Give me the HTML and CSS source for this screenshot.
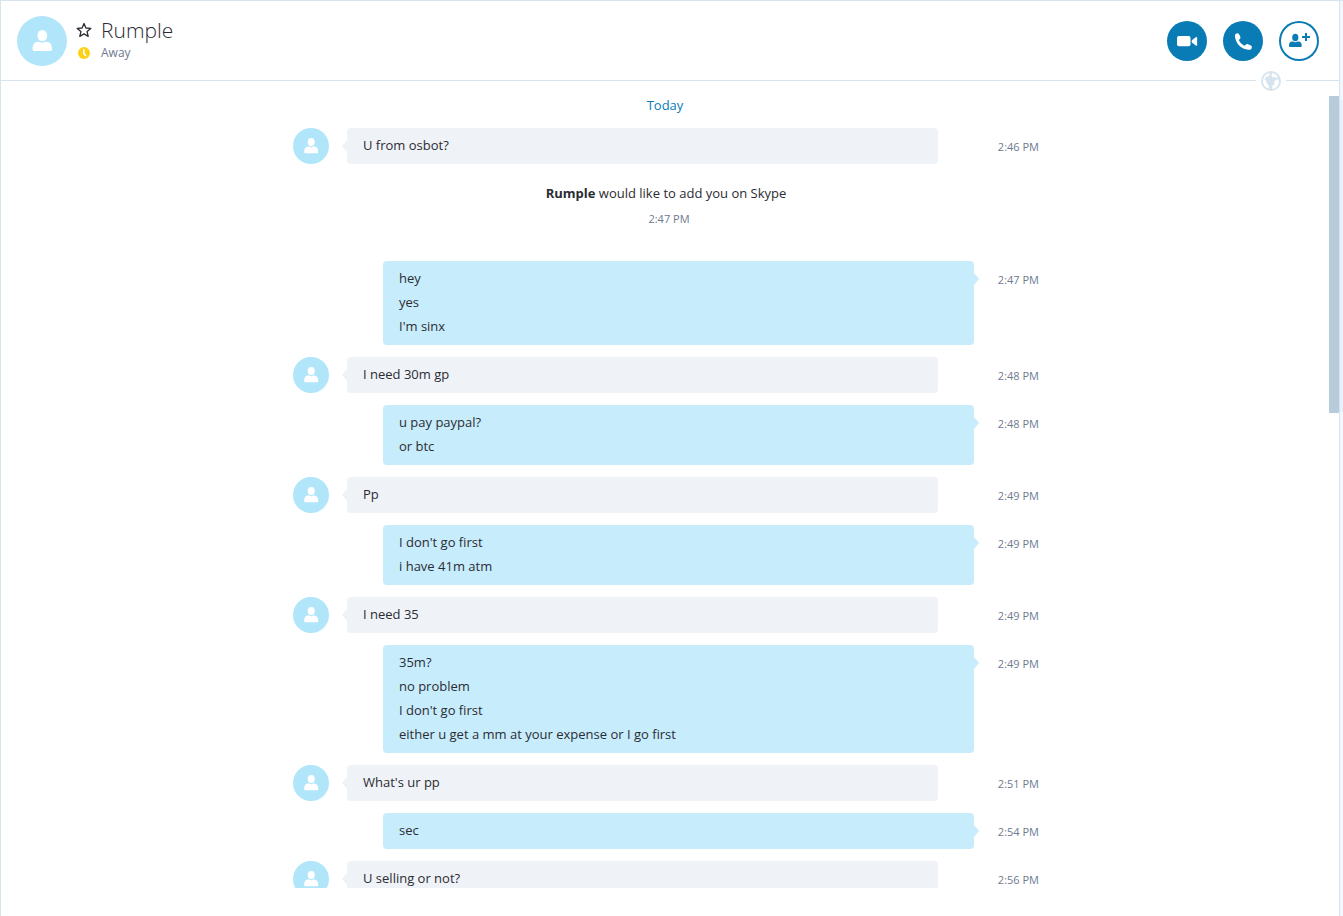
FILE: index.html
```
<!DOCTYPE html>
<html lang="en">
<head>
    <meta charset="UTF-8">
    <meta name="viewport" content="width=device-width, initial-scale=1.0">
    <title>Rumple</title>
    <link rel="stylesheet" href="styles.css">
</head>
<body>
    <!-- Shared icons -->
    <svg class="sprite" aria-hidden="true">
        <symbol id="person" viewBox="0 0 50 50">
            <ellipse cx="25.300" cy="19.600" rx="4.900" ry="5.700"/>
            <path d="M15.600 33c0-4 1.800-7.200 5.600-7.200 1.600 0 2.200 1 4.100 1s2.500-1 4.100-1c3.800 0 5.600 3.200 5.600 7.200 0 1.400-.6 2.100-1.700 2.100H17.300c-1.100 0-1.700-.7-1.700-2.100z"/>
        </symbol>
    </svg>

    <div class="window">
        <main class="chat">
            <header class="chat-header">
                <div class="avatar avatar-large"><svg><use href="#person"/></svg></div>
                <div class="contact">
                    <button type="button" class="icon-button" aria-label="Add to favourites">
                        <svg width="16" height="16" viewBox="0 0 16 16"><path d="M8 1.500l1.900 4.500 4.900.4-3.700 3.200 1.100 4.800L8 11.900l-4.200 2.500 1.100-4.800L1.200 6.400l4.900-.4z" fill="none" stroke="#2b2c33" stroke-width="1.300" stroke-linejoin="round"/></svg>
                    </button>
                    <h1>Rumple</h1>
                    <svg width="12" height="12" viewBox="0 0 12 12"><circle cx="6" cy="6" r="6" fill="#fcd116"/><path d="M5.800 2.800v3.700l1.800 2" fill="none" stroke="#fff" stroke-width="1.700" stroke-linecap="round" stroke-linejoin="round"/></svg>
                    <p>Away</p>
                </div>
                <div class="calls">
                    <button type="button" class="call" aria-label="Video call">
                        <svg width="40" height="40" viewBox="0 0 40 40"><rect x="10" y="15" width="13.500" height="10.300" rx="2"/><path d="M24.800 19.200l4-3c.7-.5 1.300-.3 1.300.5v7.200c0 .8-.6 1-1.300.5l-4-3z"/></svg>
                    </button>
                    <button type="button" class="call" aria-label="Call">
                        <svg width="40" height="40" viewBox="0 0 40 40"><path d="M12.600 13c1.200-1 2.900-.9 3.600.4l1.100 2.400c.4.900.1 1.700-.8 2.500-.6.5-.6 1.100-.1 2 1.200 1.800 2.300 2.900 4 3.900.9.500 1.500.4 2.100-.2.800-.8 1.600-1.100 2.500-.7l2.500 1c1.200.5 1.500 1.500 1.200 2.600-.4 1.500-1.700 2-3.200 1.900-7.400-.6-12.500-6-13.400-12.500-.2-1.400-.2-2.600.5-3.300z"/></svg>
                    </button>
                    <button type="button" class="call call-outline" aria-label="Add people">
                        <svg width="40" height="40" viewBox="0 0 40 40"><ellipse cx="16.300" cy="16.500" rx="3.100" ry="3.800"/><path d="M10 24.700c0-2.600 1-4.200 3.200-4.200 1.100 0 1.700.7 3.100.7s2-.7 3.100-.7c2.200 0 3.300 1.600 3.300 4.200 0 .9-.4 1.300-1.200 1.300H11.200c-.8 0-1.200-.4-1.200-1.300z"/><path d="M27 12v8M23 16h8" stroke="#0a7cb5" stroke-width="2"/></svg>
                    </button>
                </div>
                <button type="button" class="globe" aria-label="Translator">
                    <svg width="20" height="20" viewBox="0 0 20 20"><circle cx="10" cy="10" r="10" fill="#d7e4ee"/><path d="M2 10.500C2 6.500 4 3.500 7.500 2.300L9 3.500 7.800 5 5 6 3.500 8.500 5 9.500 5.500 12l2 2 .5 3.500C4.500 17 2 14 2 10.500zM11 2c2.500.3 4.500 1.600 5.800 3.600L15.500 7 14 6l-2 .7-1.500-2zM17 8l1 3c-.3 3.500-3 6.500-6.500 7L11 15.500l2.500-2.500-.5-2.500 1.500-1z" fill="#fff"/></svg>
                </button>
            </header>

            <section class="messages">
                <div class="scroll">
                    <div class="day">Today</div>
                    <ol class="thread">
                        <li class="row">
                            <div class="avatar"><svg><use href="#person"/></svg></div>
                            <div class="bubble"><p>U from osbot?</p></div>
                            <time>2:46 PM</time>
                        </li>
                        <li class="notice">
                            <p><strong>Rumple</strong> would like to add you on Skype</p>
                            <time>2:47 PM</time>
                        </li>
                        <li class="row">
                            <div class="bubble mine"><p>hey</p><p>yes</p><p>I'm sinx</p></div>
                            <time>2:47 PM</time>
                        </li>
                        <li class="row">
                            <div class="avatar"><svg><use href="#person"/></svg></div>
                            <div class="bubble"><p>I need 30m gp</p></div>
                            <time>2:48 PM</time>
                        </li>
                        <li class="row">
                            <div class="bubble mine"><p>u pay paypal?</p><p>or btc</p></div>
                            <time>2:48 PM</time>
                        </li>
                        <li class="row">
                            <div class="avatar"><svg><use href="#person"/></svg></div>
                            <div class="bubble"><p>Pp</p></div>
                            <time>2:49 PM</time>
                        </li>
                        <li class="row">
                            <div class="bubble mine"><p>I don't go first</p><p>i have 41m atm</p></div>
                            <time>2:49 PM</time>
                        </li>
                        <li class="row">
                            <div class="avatar"><svg><use href="#person"/></svg></div>
                            <div class="bubble"><p>I need 35</p></div>
                            <time>2:49 PM</time>
                        </li>
                        <li class="row">
                            <div class="bubble mine"><p>35m?</p><p>no problem</p><p>I don't go first</p><p>either u get a mm at your expense or I go first</p></div>
                            <time>2:49 PM</time>
                        </li>
                        <li class="row">
                            <div class="avatar"><svg><use href="#person"/></svg></div>
                            <div class="bubble"><p>What's ur pp</p></div>
                            <time>2:51 PM</time>
                        </li>
                        <li class="row">
                            <div class="bubble mine"><p>sec</p></div>
                            <time>2:54 PM</time>
                        </li>
                        <li class="row">
                            <div class="avatar"><svg><use href="#person"/></svg></div>
                            <div class="bubble"><p>U selling or not?</p></div>
                            <time>2:56 PM</time>
                        </li>
                    </ol>
                </div>
                <div class="scrollbar"><div class="thumb"></div></div>
            </section>
        </main>
        <aside class="side"><div class="side-item"></div></aside>
    </div>
</body>
</html>
```
FILE: styles.css
```
* {
    box-sizing: border-box;
}
body {
    margin: 0;
    font-family: "Open Sans", "Noto Sans", sans-serif;
    font-size: 13px;
    line-height: 24px;
    color: #2b2c33;
    background-color: #ffffff;
}
h1, p, ol {
    margin: 0;
    padding: 0;
}
button {
    padding: 0;
    border: none;
    background: none;
    cursor: pointer;
}
svg {
    display: block;
}
.sprite {
    display: none;
}
.window {
    display: flex;
    height: 100vh;
    border-top: 1px solid #d7e4ee;
    border-left: 1px solid #d7e4ee;
}
.chat {
    flex: 1;
    min-width: 0;
    display: flex;
    flex-direction: column;
    padding-bottom: 28px;
}

/* Header */
.chat-header {
    position: relative;
    display: flex;
    align-items: center;
    padding: 15px 20px 14px 16px;
    border-bottom: 1px solid #d7e4ee;
}
.avatar {
    flex: none;
    width: 36px;
    height: 36px;
    border-radius: 50%;
    background-color: #b1e6fa;
}
.avatar svg {
    width: 100%;
    height: 100%;
    fill: #ffffff;
}
.avatar-large {
    width: 50px;
    height: 50px;
}
.contact {
    flex: 1;
    display: grid;
    grid-template-columns: 16px 1fr;
    column-gap: 9px;
    align-items: center;
    justify-items: start;
    margin-left: 9px;
    padding-bottom: 4px;
}
.contact > svg {
    justify-self: center;
}
.contact h1 {
    font-size: 21px;
    font-weight: 300;
    line-height: 28px;
}
.contact p {
    font-size: 12px;
    line-height: 18px;
    color: #6e7a8f;
}
.calls {
    display: flex;
    gap: 16px;
}
.call {
    width: 40px;
    height: 40px;
    border-radius: 50%;
    background-color: #0a7cb5;
    fill: #ffffff;
}
.call-outline {
    background-color: #ffffff;
    box-shadow: inset 0 0 0 2px #0a7cb5;
    fill: #0a7cb5;
}
.globe {
    position: absolute;
    right: 53px;
    bottom: -11px;
    padding: 0 5px;
    background-color: #ffffff;
}

/* Messages */
.messages {
    flex: 1;
    min-height: 0;
    display: flex;
    overflow: hidden;
}
.scroll {
    flex: 1;
    padding-top: 13px;
}
.day {
    display: flex;
    align-items: center;
    gap: 18px;
    line-height: 22px;
    color: #0a7cb5;
}
.day::before, .day::after {
    content: "";
    flex: 1;
    height: 1px;
    background-color: #fcfdfd;
}
.thread {
    list-style: none;
    max-width: 748px;
    margin: 0 auto;
    padding: 12px 0 0 2px;
}
.row {
    display: flex;
    align-items: flex-start;
    margin-bottom: 12px;
}
.bubble {
    position: relative;
    flex: 1;
    margin: 0 36px 0 18px;
    padding: 5px 16px 7px;
    border-radius: 4px;
    background-color: #eff2f7;
}
.bubble::before {
    content: "";
    position: absolute;
    top: 12px;
    left: -5px;
    border: solid transparent;
    border-width: 6px 5px 6px 0;
    border-right-color: #eff2f7;
}
.mine {
    margin: 0 0 0 90px;
    background-color: #c7ecfc;
}
.mine::before {
    left: auto;
    right: -5px;
    border-width: 6px 0 6px 5px;
    border-color: transparent transparent transparent #c7ecfc;
}
time {
    font-size: 11px;
    color: #6e7a8f;
}
.row time {
    width: 65px;
    padding-top: 7px;
    text-align: right;
}
.notice {
    padding: 5px 0 16px;
    margin-bottom: 12px;
    text-align: center;
}
.notice time {
    display: block;
    padding-left: 6px;
    line-height: 28px;
}

/* Scrollbar and the edge of the next panel */
.scrollbar {
    width: 10px;
    padding-top: 15px;
}
.thumb {
    height: 40%;
    background-color: #b7cbda;
}
.side {
    width: 4px;
    padding-top: 99px;
    border-left: 1px solid #d7e4ee;
    background-color: #f0f8fe;
}
.side-item {
    height: 312px;
    background-color: #e5f2fd;
}
```
